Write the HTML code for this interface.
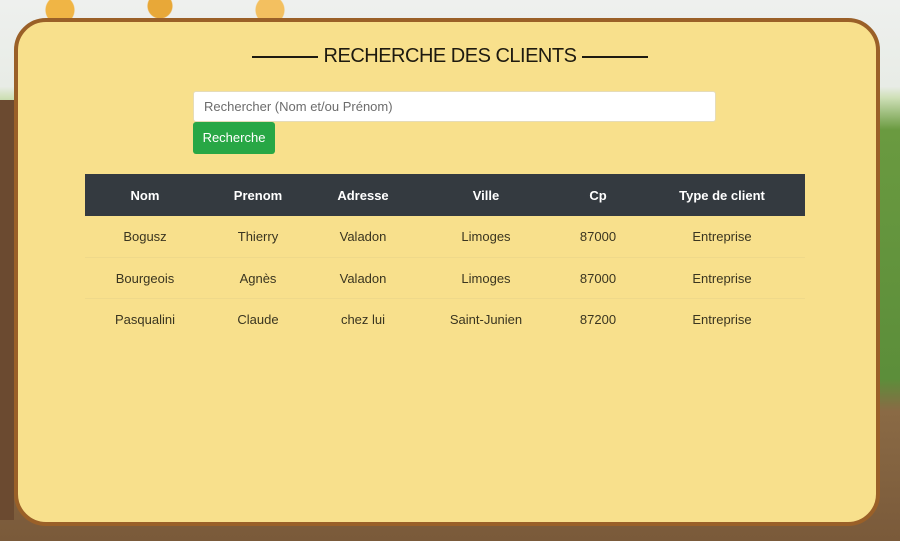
<!DOCTYPE html>
<html><head><meta charset="utf-8"><style>
html,body{margin:0;width:900px;height:541px;overflow:hidden;font-family:"Liberation Sans",sans-serif;}
body{background:linear-gradient(180deg,#eef0ee 0%,#e8ece6 16%,#cfe0b8 18%,#6a9a40 24%,#5c8e3a 70%,#8a6a45 76%,#7a5a3a 100%);position:relative;}
.tree{position:absolute;left:0;top:0;width:330px;height:60px;background:radial-gradient(circle at 60px 10px,#f0b545 0 14px,transparent 15px),radial-gradient(circle at 160px 6px,#e8a838 0 12px,transparent 13px),radial-gradient(circle at 270px 10px,#f3c060 0 14px,transparent 15px);}
.trunk{position:absolute;left:0;top:100px;width:14px;height:420px;background:#6b4a30;}
.card{position:absolute;left:14px;top:18px;width:858px;height:500px;border:4px solid #9a6028;border-radius:32px;background:#f8e08c;}
h1{position:absolute;left:0;right:0;top:45px;margin:0;text-align:center;font:20px "Liberation Sans",sans-serif;color:#1e1a10;letter-spacing:-0.5px;}
h1 span{display:inline-block;width:66px;border-top:2px solid #1e1a10;vertical-align:middle;margin:0 6px;}
.inp{position:absolute;left:193px;top:91px;width:523px;height:31px;background:#fff;border:1px solid #e6dcb8;border-radius:3px;box-sizing:border-box;padding:0 10px;line-height:29px;font-size:13px;color:#6c6c6c;}
.btn{position:absolute;left:193px;top:122px;width:82px;height:32px;background:#28a745;border-radius:3px;color:#fff;font-size:13px;line-height:32px;text-align:center;}
table{position:absolute;left:85px;top:174px;width:720px;border-collapse:collapse;font-size:13px;}
th{background:#343a40;color:#fff;height:42px;padding:0;font-weight:bold;text-align:center;}
td{height:40px;padding:0;text-align:center;color:#3a3520;border-top:1px solid #efd98a;}
tbody tr:first-child td{border-top:none;height:41px}
</style></head><body>
<div class="tree"></div><div class="trunk"></div>
<div class="card"></div>
<h1><span></span>RECHERCHE DES CLIENTS<span></span></h1>
<div class="inp">Rechercher (Nom et/ou Prénom)</div>
<div class="btn">Recherche</div>
<table>
<colgroup><col style="width:120px"><col style="width:106px"><col style="width:104px"><col style="width:142px"><col style="width:82px"><col style="width:166px"></colgroup>
<thead><tr><th>Nom</th><th>Prenom</th><th>Adresse</th><th>Ville</th><th>Cp</th><th>Type de client</th></tr></thead>
<tbody>
<tr><td>Bogusz</td><td>Thierry</td><td>Valadon</td><td>Limoges</td><td>87000</td><td>Entreprise</td></tr>
<tr><td>Bourgeois</td><td>Agnès</td><td>Valadon</td><td>Limoges</td><td>87000</td><td>Entreprise</td></tr>
<tr><td>Pasqualini</td><td>Claude</td><td>chez lui</td><td>Saint-Junien</td><td>87200</td><td>Entreprise</td></tr>
</tbody></table>
</body></html>
